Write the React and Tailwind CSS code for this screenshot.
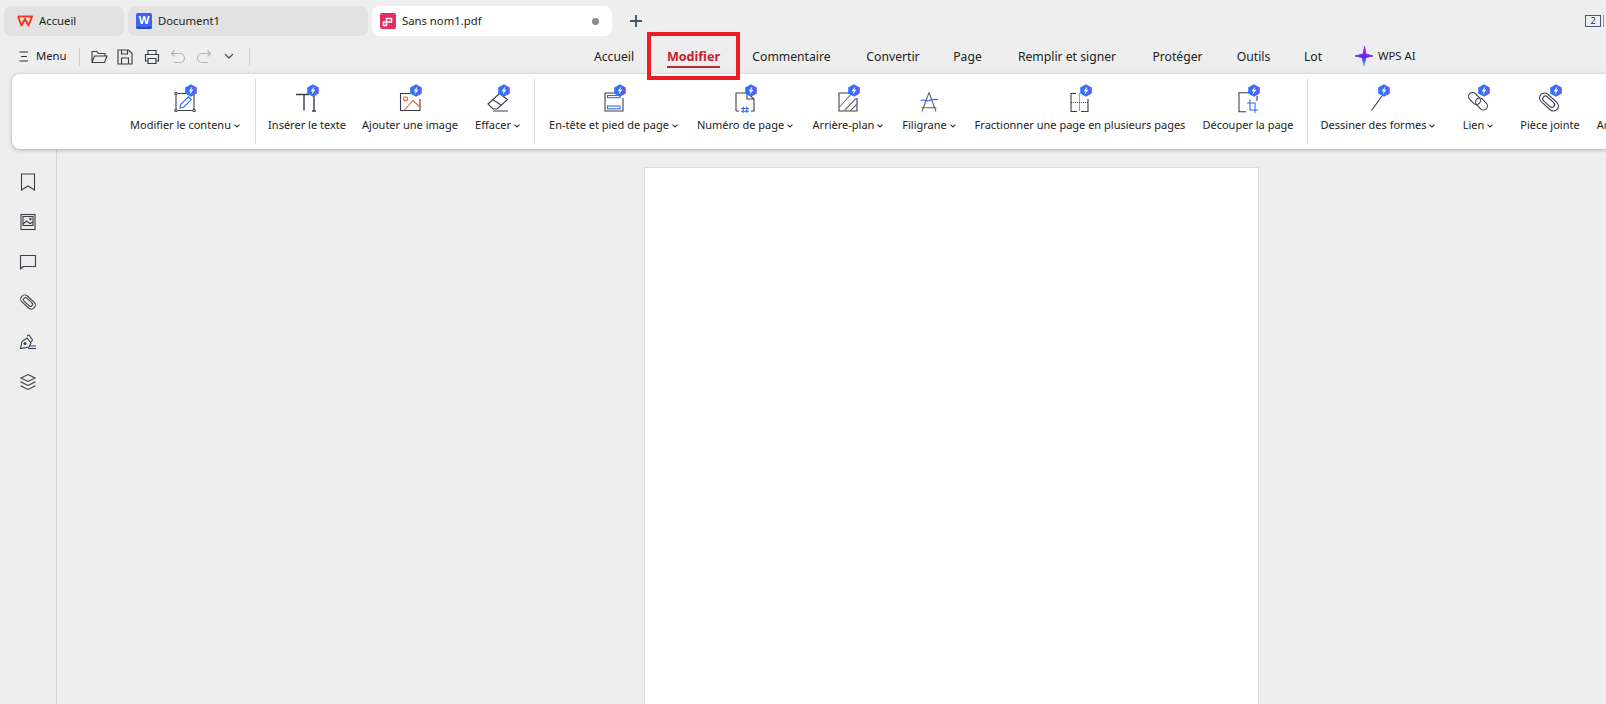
const D = "#3b3f48";
const B = "#3568ee";

function Badge() {
  return (
    <g>
      <polygon points="24,0.3 29.8,3.4 29.8,9.6 24,12.7 18.2,9.6 18.2,3.4" fill="url(#bdg)" />
      <path d="M25.2 2.4 L21.6 7.2 H23.6 L22.8 10.6 L26.4 5.8 H24.4 Z" fill="#fff" />
    </g>
  );
}

function RibIcon({ children, badge = true }) {
  return (
    <svg width="36" height="30" viewBox="0 0 36 30" fill="none" stroke={D} strokeWidth="1.1" className="block">
      {children}
      {badge && <g stroke="none"><Badge /></g>}
    </svg>
  );
}

const icons = {
  edit: (
    <RibIcon>
      <path d="M9 11V25M11 26.5H25.5M27 25V11M11 9.5H22" />
      <circle cx="9" cy="9.5" r="1.2" fill="#fff" />
      <circle cx="9" cy="26.5" r="1.2" fill="#fff" />
      <circle cx="27" cy="26.5" r="1.2" fill="#fff" />
      <path d="M13 24L13.8 20.4L21.5 12.8L24.3 15.6L16.6 23.2Z" stroke={B} />
    </RibIcon>
  ),
  text: (
    <RibIcon>
      <path d="M7 10.5H20M15 10.5V26.5M25 11V26.5M23 27H27" strokeWidth="1.4" />
    </RibIcon>
  ),
  image: (
    <RibIcon>
      <path d="M20 9.5H8.5V26.5H28V15" />
      <circle cx="13.5" cy="14.7" r="2" stroke="#e0682e" />
      <path d="M12 26.5L21 16.5L28 23" stroke="#e0682e" />
    </RibIcon>
  ),
  erase: (
    <RibIcon>
      <path d="M8 20L19.5 9.5L27.5 15.5L17 25L13 25Z" />
      <path d="M12.5 15.5L21 21" />
      <path d="M13 27H28" />
    </RibIcon>
  ),
  header: (
    <RibIcon>
      <path d="M20 9H9V27H27V14" />
      <rect x="11.5" y="11.5" width="12.5" height="2.2" stroke={B} />
      <rect x="11.5" y="22" width="12.5" height="2.8" stroke={B} />
    </RibIcon>
  ),
  number: (
    <RibIcon>
      <path d="M9 27V9H20L27 15V27H24M9 27H12" />
      <path d="M20 9V15H27" />
      <path d="M16.2 22.5V29M19.8 22.5V29M14 24.5H22M14 27.2H22" stroke={B} />
    </RibIcon>
  ),
  background: (
    <RibIcon>
      <path d="M20 9H9V27H27V14" />
      <path d="M9.5 23L21 10.5M14.5 26.5L26.5 14M20.5 26.5L26.5 20.5" stroke="#6a6d74" />
    </RibIcon>
  ),
  watermark: (
    <RibIcon badge={false}>
      <path d="M18 8.5L11 27.5M18 8.5L25 27.5M10.5 23.7H25.5" stroke="#62656c" />
      <path d="M9.5 16.5C13 14.5 15 18 18.5 16.5C21.5 15.2 24 15 27 15.8" stroke={B} />
    </RibIcon>
  ),
  split: (
    <RibIcon>
      <path d="M14 9.5H9V27.5H15M19 27.5H26V15" />
      <path d="M17.5 9.5V27.5M9 18.5H26" strokeDasharray="1 1" strokeWidth="1" />
    </RibIcon>
  ),
  crop: (
    <RibIcon>
      <path d="M21 8.7H9V27.7H16" />
      <path d="M27 12V17" />
      <path d="M20 15.5V26H28M17 19H25V29" stroke={B} />
    </RibIcon>
  ),
  shape: (
    <RibIcon>
      <path d="M11.5 26.5L22 12" />
    </RibIcon>
  ),
  link: (
    <RibIcon>
      <rect x="7.75" y="10.5" width="13.5" height="8" rx="4" transform="rotate(45 14.5 14.5)" />
      <rect x="14.75" y="16" width="13.5" height="8" rx="4" transform="rotate(45 21.5 20)" />
    </RibIcon>
  ),
  clip: (
    <RibIcon>
      <rect x="6" y="13" width="22" height="10" rx="5" transform="rotate(42 17 18)" />
      <rect x="9.5" y="15.3" width="14" height="5.4" rx="2.7" transform="rotate(42 17 18)" />
    </RibIcon>
  ),
  more: (
    <RibIcon badge={false}>
      <rect x="15" y="14" width="16" height="9" rx="1.5" />
    </RibIcon>
  ),
};

function Chevron() {
  return (
    <svg width="6" height="4" viewBox="0 0 6 4" fill="none" stroke="#333" strokeWidth="1.1" className="ml-[3px] mt-[2px] shrink-0">
      <path d="M0.5 0.7L3 3L5.5 0.7" />
    </svg>
  );
}

function Item({ w, icon, label, chev }) {
  return (
    <div className={`${w} shrink-0 flex flex-col items-center`}>
      {icons[icon]}
      <div className="mt-[2px] h-[18px] flex items-center whitespace-nowrap text-[11px] text-[#222]">
        <span>{label}</span>
        {chev && <Chevron />}
      </div>
    </div>
  );
}

function Divider({ className }) {
  return <div className={`w-px h-[65px] bg-[#d9d9d9] shrink-0 self-start -mt-[5px] ${className}`} />;
}

function Tab({ w, active, icon, label, dot }) {
  return (
    <div className={`${w} h-[30px] rounded-lg flex items-center ${active ? "bg-white" : "bg-[#e2e2e2]"}`}>
      {icon}
      <span className="text-[11.3px] text-[#222]">{label}</span>
      {dot && <span className="ml-auto mr-[13px] w-[7px] h-[7px] rounded-full bg-[#8c8c8c]" />}
    </div>
  );
}

function NavItem({ w, label, active }) {
  return (
    <div className={`${w} shrink-0 flex justify-center`}>
      <span className={`relative whitespace-nowrap ${active ? "font-bold text-[12.6px] text-[#c5202e]" : "text-[#222]"}`}>
        {label}
        {active && <span className="absolute left-0 right-0 top-[18px] h-[2px] bg-[#b92a38]" />}
      </span>
    </div>
  );
}

function Side({ children }) {
  return (
    <div className="h-[40px] flex items-center justify-center">
      <svg width="20" height="20" viewBox="0 0 20 20" fill="none" stroke={D} strokeWidth="1.1">
        {children}
      </svg>
    </div>
  );
}

export default function App() {
  return (
    <div
      className="relative w-[1606px] h-[704px] overflow-hidden bg-[#eeeeee] flex flex-col"
      style={{ fontFamily: '"Noto Sans", sans-serif' }}
    >
      <svg width="0" height="0" className="absolute">
        <defs>
          <linearGradient id="bdg" x1="0" y1="0" x2="1" y2="0">
            <stop offset="0" stopColor="#1f7bff" />
            <stop offset="1" stopColor="#5f5cf5" />
          </linearGradient>
          <linearGradient id="ai" x1="0" y1="0" x2="0" y2="1">
            <stop offset="0" stopColor="#b020f0" />
            <stop offset="0.55" stopColor="#5a2cf0" />
            <stop offset="1" stopColor="#46b8f5" />
          </linearGradient>
        </defs>
      </svg>

      {/* Tabs */}
      <div className="h-[42px] shrink-0 pt-[6px] pl-[4px] flex gap-[4px]">
        <Tab
          w="w-[120px]"
          label="Accueil"
          icon={
            <svg width="16" height="12" viewBox="0 0 16 12" fill="none" stroke="#ee3a24" strokeWidth="2" className="ml-[13px] mr-[6px]">
              <path d="M1 1.5L4.5 10.5L8 4L11.5 10.5L15 1.5H1" strokeLinejoin="round" />
            </svg>
          }
        />
        <Tab
          w="w-[240px]"
          label="Document1"
          icon={
            <div className="relative ml-[8px] mr-[6px] w-[16px] h-[16px] rounded-[2px] bg-[#3d63ee] overflow-hidden flex items-start justify-center">
              <span className="text-[11px] leading-[14px] font-bold text-white">W</span>
              <span className="absolute left-0 right-0 bottom-0 h-[2px] bg-[#2447c8]" />
            </div>
          }
        />
        <Tab
          w="w-[240px]"
          active
          dot
          label="Sans nom1.pdf"
          icon={
            <div className="ml-[8px] mr-[6px] w-[16px] h-[16px] rounded-[2px] bg-[#e5305f]">
              <svg width="16" height="16" viewBox="0 0 16 16" fill="none" stroke="#fff" strokeWidth="1.5">
                <path d="M8 5.5H11.5V9H6.5V12.5H3.5V9H6.5V5.5Z" strokeLinejoin="round" />
              </svg>
            </div>
          }
        />
        <svg width="14" height="14" viewBox="0 0 14 14" stroke="#4a5568" strokeWidth="1.9" className="ml-[13px] mt-[8px]">
          <path d="M7 1V13M1 7H13" />
        </svg>
        <div className="ml-auto flex items-start mt-[9px] -mr-[2px]">
          <span className="w-[16px] h-[12px] border border-[#4a5578] text-[9px] leading-[10px] text-center text-[#333]">2</span>
          <span className="ml-[2px] w-[5px] h-[12px] border-x border-[#8a93a8]" />
        </div>
      </div>

      {/* Quick access + nav */}
      <div className="h-[32px] shrink-0 flex items-center text-[12.2px] -mt-px">
        <div className="w-[577px] shrink-0 pl-[19px] -mt-[1px] flex items-center">
          <svg width="10" height="11" viewBox="0 0 10 11" stroke="#333" strokeWidth="1.1">
            <path d="M0.5 1H9M2 5.5H8M0.5 10H9" />
          </svg>
          <span className="ml-[7px] text-[11.3px] text-[#222]">Menu</span>
          <div className="ml-[12px] w-px h-[18px] bg-[#cfcfcf]" />
          <svg width="17" height="16" viewBox="0 0 17 16" fill="none" stroke={D} strokeWidth="1.1" className="ml-[11px]">
            <path d="M1 13.5V2.5H6L7.5 4.5H14V7M1 13.5H13.5L16 7H3.5L1 13.5Z" />
          </svg>
          <svg width="16" height="16" viewBox="0 0 16 16" fill="none" stroke={D} strokeWidth="1.1" className="ml-[9px]">
            <path d="M1 1H11.5L15 4.5V15H1Z" />
            <path d="M4.5 1V5H10.5V1M4.5 15V9H11.5V15" />
          </svg>
          <svg width="16" height="16" viewBox="0 0 16 16" fill="none" stroke={D} strokeWidth="1.2" className="ml-[11px]">
            <path d="M4 5V1.5H12V5M4 12H1.5V5.5H14.5V12H12M4 9.5H12V14.5H4Z" />
          </svg>
          <svg width="16" height="16" viewBox="0 0 16 16" fill="none" stroke="#b5b5b5" strokeWidth="1.2" className="ml-[10px]">
            <path d="M4.5 1.5L1.5 4.5L4.5 7.5M1.5 4.5H10A4.5 4.5 0 0 1 10 13.5H4" />
          </svg>
          <svg width="16" height="16" viewBox="0 0 16 16" fill="none" stroke="#b5b5b5" strokeWidth="1.2" className="ml-[10px]">
            <path d="M11.5 1.5L14.5 4.5L11.5 7.5M14.5 4.5H6A4.5 4.5 0 0 0 6 13.5H12" />
          </svg>
          <svg width="10" height="7" viewBox="0 0 10 7" fill="none" stroke="#555" strokeWidth="1.3" className="ml-[12px]">
            <path d="M1 1L5 5L9 1" />
          </svg>
          <div className="ml-[15px] w-px h-[18px] bg-[#cfcfcf]" />
        </div>
        <NavItem w="w-[74px]" label="Accueil" />
        <NavItem w="w-[85px]" label="Modifier" active />
        <NavItem w="w-[111px]" label="Commentaire" />
        <NavItem w="w-[92px]" label="Convertir" />
        <NavItem w="w-[57px]" label="Page" />
        <NavItem w="w-[142px]" label="Remplir et signer" />
        <NavItem w="w-[79px]" label="Protéger" />
        <NavItem w="w-[73px]" label="Outils" />
        <NavItem w="w-[46px]" label="Lot" />
        <div className="ml-[19px] -mt-[2px] flex items-center">
          <svg width="18" height="20" viewBox="0 0 18 20">
            <path d="M9.5 0L11 8L18 10L11 11.5L9 20L7 11.5L0 10L8 8Z" fill="url(#ai)" stroke="url(#ai)" strokeWidth="0.8" />
          </svg>
          <span className="ml-[5px] text-[11.3px] text-[#222]">WPS AI</span>
        </div>
      </div>

      {/* Ribbon */}
      <div className="relative z-10 mt-px ml-[12px] h-[75px] shrink-0 pl-[108px] pt-[10px] bg-white rounded-l-lg shadow-[0_1px_4px_rgba(0,0,0,0.28)] flex overflow-hidden">
        <Item w="w-[130px]" icon="edit" label="Modifier le contenu" chev />
        <Divider className="ml-[5px] mr-[5px]" />
        <Item w="w-[92px]" icon="text" label="Insérer le texte" />
        <Item w="w-[114px]" icon="image" label="Ajouter une image" />
        <Item w="w-[61px]" icon="erase" label="Effacer" chev />
        <Divider className="ml-[6px] mr-[5px]" />
        <Item w="w-[147px]" icon="header" label="En-tête et pied de page" chev />
        <Item w="w-[116px]" icon="number" label="Numéro de page" chev />
        <Item w="w-[90px]" icon="background" label="Arrière-plan" chev />
        <Item w="w-[72px]" icon="watermark" label="Filigrane" chev />
        <Item w="w-[230px]" icon="split" label="Fractionner une page en plusieurs pages" />
        <Item w="w-[106px]" icon="crop" label="Découper la page" />
        <Divider className="ml-[6px] mr-[6px]" />
        <Item w="w-[128px]" icon="shape" label="Dessiner des formes" chev />
        <Item w="w-[72px]" icon="link" label="Lien" chev />
        <Item w="w-[72px]" icon="clip" label="Pièce jointe" />
        <Item w="w-[50px]" icon="more" label="Autre" />
      </div>

      {/* Body */}
      <div className="flex-1 flex min-h-0">
        <div className="w-[57px] shrink-0 border-r border-[#d6d6d6] pt-[13px] flex flex-col">
          <Side><path d="M3.5 2H16.5V18L10 14L3.5 18Z" /></Side>
          <Side>
            <rect x="3" y="2.5" width="14" height="15" />
            <rect x="5" y="4.5" width="10" height="9" />
            <path d="M5 12L8.5 9L12 11.5L15 10" />
            <circle cx="12.5" cy="7" r="0.7" />
          </Side>
          <Side><path d="M2.5 3.5H17.5V14.5H5L2.5 17Z" strokeLinejoin="round" /></Side>
          <Side>
            <rect x="1.5" y="6" width="17" height="8" rx="4" transform="rotate(42 10 10)" />
            <rect x="4.5" y="8" width="11" height="4" rx="2" transform="rotate(42 10 10)" />
          </Side>
          <Side>
            <path d="M2.5 16.5L4 9.5L9 6L13 11L11 15L2.5 16.5Z" />
            <path d="M9 4L11 3L14.5 8L13 10" />
            <circle cx="7" cy="11.5" r="1" fill={D} />
            <path d="M12 14H18M10 16.5H18" stroke="#2c3a6a" />
          </Side>
          <Side>
            <path d="M10 2.5L17 6L10 9.5L3 6Z" />
            <path d="M3.5 9.5L3 10L10 13.5L17 10L16.5 9.5" />
            <path d="M3.5 13.5L3 14L10 17.5L17 14L16.5 13.5" />
          </Side>
        </div>
        <div className="ml-[587px] mt-[18px] w-[615px] h-[600px] bg-white border border-[#dcdcdc]" />
      </div>

      {/* Red highlight annotation */}
      <div className="absolute z-20 left-[647px] top-[32px] w-[93px] h-[48px] border-4 border-[#ee1c25]" />
    </div>
  );
}
